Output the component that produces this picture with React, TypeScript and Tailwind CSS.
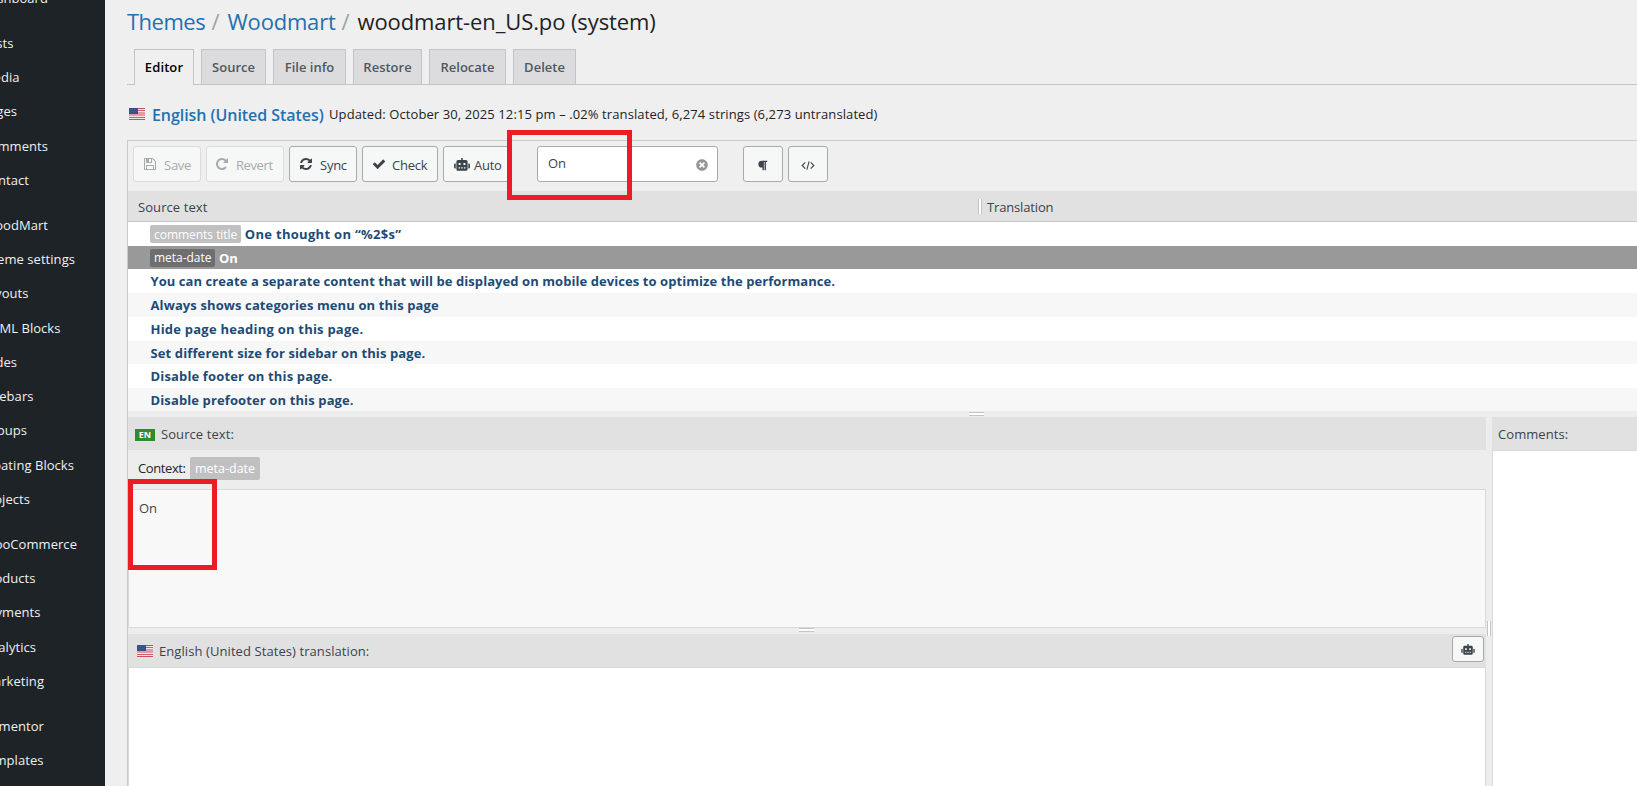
import { ReactNode } from "react";
import { FaParagraph, FaTimesCircle } from "react-icons/fa";

type MenuItem = { label: string; end: string; gap?: boolean };
type Row = { text: string; context?: string; height: string; bg: string; tracking: string; active?: boolean };

const MENU: MenuItem[] = [
  { label: "Dashboard", end: "w-[48px]" },
  { label: "Posts", end: "w-[13.5px]", gap: true },
  { label: "Media", end: "w-[19.5px]" },
  { label: "Pages", end: "w-[17px]" },
  { label: "Comments", end: "w-[48px]" },
  { label: "Contact", end: "w-[29px]" },
  { label: "WoodMart", end: "w-[48px]", gap: true },
  { label: "Theme settings", end: "w-[75px]" },
  { label: "Layouts", end: "w-[28.5px]" },
  { label: "HTML Blocks", end: "w-[60.5px]" },
  { label: "Slides", end: "w-[17px]" },
  { label: "Sidebars", end: "w-[33.5px]" },
  { label: "Popups", end: "w-[27px]" },
  { label: "Floating Blocks", end: "w-[74px]" },
  { label: "Projects", end: "w-[30px]" },
  { label: "WooCommerce", end: "w-[77px]", gap: true },
  { label: "Products", end: "w-[35.5px]" },
  { label: "Payments", end: "w-[40.5px]" },
  { label: "Analytics", end: "w-[36px]" },
  { label: "Marketing", end: "w-[44px]" },
  { label: "Elementor", end: "w-[44px]", gap: true },
  { label: "Templates", end: "w-[43.5px]" },
];

const TABS = [
  { label: "Source", width: "w-[65px]" },
  { label: "File info", width: "w-[73px]" },
  { label: "Restore", width: "w-[69px]" },
  { label: "Relocate", width: "w-[77px]" },
  { label: "Delete", width: "w-[63px]" },
];

const ROWS: Row[] = [
  { text: "One thought on “%2$s”", context: "comments title", height: "h-[24px]", bg: "bg-white", tracking: "tracking-[0.3px]" },
  { text: "On", context: "meta-date", height: "h-[23px]", bg: "bg-[#999999]", tracking: "tracking-[0.1px]", active: true },
  {
    text: "You can create a separate content that will be displayed on mobile devices to optimize the performance.",
    height: "h-[24px]",
    bg: "bg-white",
    tracking: "tracking-[0.07px]",
  },
  { text: "Always shows categories menu on this page", height: "h-[24px]", bg: "bg-[#f7f7f7]", tracking: "tracking-[0.11px]" },
  { text: "Hide page heading on this page.", height: "h-[24px]", bg: "bg-white", tracking: "tracking-[0.22px]" },
  { text: "Set different size for sidebar on this page.", height: "h-[23px]", bg: "bg-[#f7f7f7]", tracking: "tracking-[0.12px]" },
  { text: "Disable footer on this page.", height: "h-[24px]", bg: "bg-white", tracking: "tracking-[0.15px]" },
  { text: "Disable prefooter on this page.", height: "h-[23px]", bg: "bg-[#f7f7f7]", tracking: "tracking-[0.12px]" },
];

function SaveIcon() {
  return (
    <svg className="mb-px h-[14px] w-[12px]" viewBox="0 0 1536 1792" fill="currentColor">
      <path d="M384 1536h768v-384h-768v384zm896 0h128v-896q0-14-10-38.5t-20-34.5l-281-281q-10-10-34-20t-39-10v416q0 40-28 68t-68 28h-576q-40 0-68-28t-28-68v-416h-128v1280h128v-416q0-40 28-68t68-28h832q40 0 68 28t28 68v416zm-384-928v-320q0-13-9.5-22.5t-22.5-9.5h-192q-13 0-22.5 9.5t-9.5 22.5v320q0 13 9.5 22.5t22.5 9.5h192q13 0 22.5-9.5t9.5-22.5zm640 32v928q0 40-28 68t-68 28h-1344q-40 0-68-28t-28-68v-1344q0-40 28-68t68-28h928q40 0 88 20t76 48l280 280q28 28 48 76t20 88z" />
    </svg>
  );
}

function RevertIcon() {
  return (
    <svg className="h-[14px] w-[12px]" viewBox="0 0 1536 1792" fill="currentColor">
      <path d="M1536 256v448q0 26-19 45t-45 19h-448q-42 0-59-40-17-39 14-69l138-138q-148-137-349-137-104 0-198.5 40.5t-163.5 109.5-109.5 163.5-40.5 198.5 40.5 198.5 109.5 163.5 163.5 109.5 198.5 40.5q119 0 225-52t179-147q7-10 23-12 15 0 25 9l137 138q9 8 9.500 20.500t-7.500 22.500q-109 132-264 204.500t-327 72.500q-156 0-298-61t-245-164-164-245-61-298 61-298 164-245 245-164 298-61q147 0 284.500 55.500t244.500 156.500l130-129q29-31 70-14 39 17 39 59z" />
    </svg>
  );
}

function SyncIcon() {
  return (
    <svg className="h-[14px] w-[12px]" viewBox="0 0 1536 1792" fill="currentColor">
      <path d="M1511 1056q0 5-1 7-64 268-268 434.5t-478 166.5q-146 0-282.5-55t-243.5-157l-129 129q-19 19-45 19t-45-19-19-45v-448q0-26 19-45t45-19h448q26 0 45 19t19 45-19 45l-137 137q71 66 161 102t187 36q134 0 250-65t186-179q11-17 53-117 8-23 30-23h192q13 0 22.5 9.5t9.5 22.5zm25-800v448q0 26-19 45t-45 19h-448q-26 0-45-19t-19-45 19-45l138-138q-148-137-349-137-134 0-250 65t-186 179q-11 17-53 117-8 23-30 23h-199q-13 0-22.5-9.5t-9.5-22.5v-7q65-268 270-434.5t480-166.5q146 0 284 55.5t245 156.5l130-129q19-19 45-19t45 19 19 45z" />
    </svg>
  );
}

function CheckIcon() {
  return (
    <svg className="h-[14px] w-[14px]" viewBox="0 0 1792 1792" fill="currentColor">
      <path d="M1671 566q0 40-28 68l-724 724-136 136q-28 28-68 28t-68-28l-136-136-362-362q-28-28-28-68t28-68l136-136q28-28 68-28t68 28l294 295 656-657q28-28 68-28t68 28l136 136q28 28 28 68z" />
    </svg>
  );
}

function RobotIcon({ className }: { className: string }) {
  return (
    <svg className={className} viewBox="0 0 16 13" fill="currentColor">
      <path
        fillRule="evenodd"
        d="M7.2 0h1.6v2H12a1.6 1.6 0 0 1 1.6 1.6v7.6A1.6 1.6 0 0 1 12 12.8H4a1.6 1.6 0 0 1-1.6-1.6V3.6A1.6 1.6 0 0 1 4 2h3.2zM4.6 5v2h2V5zM9.4 5v2h2V5zM4.6 9.2v1.2h1.5V9.2zM7.25 9.2v1.2h1.5V9.2zM9.9 9.2v1.2h1.5V9.2z"
      />
      <path d="M1.7 5.5v5H1.2A1.2 1.2 0 0 1 0 9.3V6.7A1.2 1.2 0 0 1 1.2 5.5zM14.3 5.5v5h.5A1.2 1.2 0 0 0 16 9.3V6.7A1.2 1.2 0 0 0 14.8 5.5z" />
    </svg>
  );
}

function Flag() {
  return (
    <svg className="h-[12px] w-[16px] shrink-0" viewBox="0 0 16 12" shapeRendering="crispEdges">
      <rect width="16" height="12" fill="#e39aa5" />
      <path d="M0 0h16v1H0zM0 11h16v1H0z" fill="#c8505f" />
      <path d="M9 2h7v1H9zM0 9h16v1H0z" fill="#cf5f6e" />
      <path d="M9 1h7v1H9zM9 3h7v1H9zM0 8h16v1H0zM0 10h16v1H0z" fill="#f3e4e7" />
      <rect width="9" height="6" fill="#3a4f82" />
      <path d="M1 1h1v1H1zM3 1h1v1H3zM5 1h1v1H5zM7 1h1v1H7zM2 3h1v1H2zM4 3h1v1H4zM6 3h1v1H6z" fill="#4a5f90" />
    </svg>
  );
}

function ToolButton({ width, disabled, children }: { width: string; disabled?: boolean; children: ReactNode }) {
  return (
    <button
      type="button"
      className={`flex h-[36px] shrink-0 items-center rounded-[3px] border bg-[#f6f7f7] text-[13px] tracking-[-0.25px] ${width} ${
        disabled ? "border-[#dcdcde] text-[#a7aaad]" : "border-[#a7a9ab] text-[#3c434a]"
      }`}
    >
      {children}
    </button>
  );
}

function VGrip() {
  return <span className="block w-[4px] border-x border-[#c4c4c4] bg-white" />;
}

function HGrip() {
  return <span className="block h-[4px] w-[15px] border-y border-[#c4c4c4] bg-white" />;
}

export default function App() {
  return (
    <div className="relative flex h-[786px] w-[1637px] overflow-hidden bg-[#efefef] font-['Open_Sans',sans-serif] text-[13px] text-[#3c434a]">
      <aside className="w-[105px] shrink-0 overflow-hidden bg-[#1d2327]">
        <ul className="-mt-[18.6px] tracking-[0.05px] text-[#f0f0f1]">
          {MENU.map((item) => (
            <li
              key={item.label}
              className={`flex h-[34.25px] items-center justify-end whitespace-nowrap ${item.end} ${item.gap ? "mt-[10.8px]" : ""}`}
            >
              {item.label}
            </li>
          ))}
        </ul>
      </aside>

      <main className="flex min-w-0 flex-1 flex-col pl-[22px]">
        <h1 className="flex h-[43px] shrink-0 items-center whitespace-pre text-[22px] text-[#1d2327]">
          <a className="w-[84.5px] tracking-[-0.5px] text-[#2271b1]">Themes</a>
          <span className="w-[16px] text-[#a0a2a5]">/</span>
          <a className="w-[114px] tracking-[-0.2px] text-[#2271b1]">Woodmart</a>
          <span className="w-[16px] text-[#a0a2a5]">/</span>
          <span className="tracking-[-0.1px]">woodmart-en_US.po (system)</span>
        </h1>

        <nav className="mt-[6px] flex h-[36px] shrink-0 gap-[7px] border-b border-[#c3c4c7] pl-[7px] font-semibold text-[#50575e]">
          <a className="flex h-[36px] w-[60px] items-center justify-center border border-b-0 border-[#c3c4c7] bg-[#efefef] tracking-[0.1px] text-black">
            Editor
          </a>
          {TABS.map((tab) => (
            <a
              key={tab.label}
              className={`flex h-[35px] items-center justify-center border border-b-0 border-[#c3c4c7] bg-[#dcdcde] pt-px ${tab.width}`}
            >
              {tab.label}
            </a>
          ))}
        </nav>

        <div className="flex h-[55px] shrink-0 items-center whitespace-nowrap pl-[2px] pt-[3px]">
          <Flag />
          <a className="ml-[7px] mt-[2px] w-[177px] text-[16px] font-semibold tracking-[-0.06px] text-[#2271b1]">English (United States)</a>
          <span className="mt-[2px] tracking-[0.1px] text-[#1d2327]">
            Updated: October 30, 2025 12:15 pm – .02% translated, 6,274 strings (6,273 untranslated)
          </span>
        </div>

        <section className="flex flex-1 flex-col border-l border-t border-[#c9cacb]">
          <div className="flex h-[50px] shrink-0 gap-[5px] pl-[5px] pt-[5px]">
            <ToolButton width="w-[68px] pl-[10px] gap-[8px]" disabled>
              <SaveIcon />
              <span className="mt-[3px]">Save</span>
            </ToolButton>
            <ToolButton width="w-[78px] pl-[9px] gap-[8px]" disabled>
              <RevertIcon />
              <span className="mt-[3px] tracking-[-0.4px]">Revert</span>
            </ToolButton>
            <ToolButton width="w-[68px] pl-[10px] gap-[8px]">
              <SyncIcon />
              <span className="mt-[3px]">Sync</span>
            </ToolButton>
            <ToolButton width="w-[76px] pl-[9px] gap-[6px]">
              <CheckIcon />
              <span className="mt-[3px]">Check</span>
            </ToolButton>
            <ToolButton width="w-[67px] pl-[10px] gap-[4px]">
              <RobotIcon className="h-[13px] w-[16px]" />
              <span className="mt-[3px]">Auto</span>
            </ToolButton>
            <div className="ml-[22px] flex h-[36px] w-[181px] items-center justify-between rounded-[3px] border border-[#a7a9ab] bg-white pl-[10px] pr-[9px]">
              <span className="tracking-[-0.2px]">On</span>
              <FaTimesCircle className="mt-[2px] size-[12px] text-[#969696]" />
            </div>
            <div className="ml-[20px] flex gap-[5px]">
              <ToolButton width="w-[40px] justify-center pr-[2px]">
                <FaParagraph className="mt-[3px] size-[11px]" />
              </ToolButton>
              <ToolButton width="w-[40px] justify-center pr-[1px]">
                <svg className="mt-[2px] h-[9px] w-[14px]" viewBox="0 0 15 10" fill="none" stroke="currentColor" strokeWidth="1.2">
                  <path d="M4.5 1.5 1 5l3.5 3.5M10.5 1.5 14 5l-3.5 3.5M8.800 .3 6.200 9.700" />
                </svg>
              </ToolButton>
            </div>
          </div>

          <div className="flex h-[31px] shrink-0 items-center border-b border-[#c9cacb] bg-[#e1e1e1] pl-[10px]">
            <span className="mt-[3px] w-[840px] tracking-[0.08px]">Source text</span>
            <span className="flex h-[15px]">
              <VGrip />
            </span>
            <span className="ml-[5px] mt-[3px] tracking-[-0.15px]">Translation</span>
          </div>

          {ROWS.map((row) => (
            <div key={row.text} className={`flex shrink-0 items-center whitespace-nowrap pl-[22px] ${row.height} ${row.bg}`}>
              {row.context && (
                <span
                  className={`mr-[3.5px] flex h-[18px] items-center rounded-[2px] px-[4px] text-[12px] tracking-[-0.03px] text-white ${
                    row.active ? "bg-[#6e6e6e]" : "bg-[#c0c0c0] pt-px"
                  }`}
                >
                  {row.context}
                </span>
              )}
              <span
                className={`mt-[2px] font-bold ${row.tracking} ${row.context ? "" : "pl-[0.5px]"} ${row.active ? "text-white" : "text-[#1d4b76]"}`}
              >
                {row.text}
              </span>
            </div>
          ))}

          <div className="flex h-[6px] shrink-0 items-center bg-[#ededed] pl-[841px]">
            <HGrip />
          </div>

          <div className="flex min-h-0 flex-1 bg-[#ededed]">
            <div className="flex w-[1358px] shrink-0 flex-col">
              <div className="flex h-[33px] shrink-0 items-center bg-[#e1e1e1] pl-[7px]">
                <span className="mt-[3px] flex h-[12px] w-[20px] items-center justify-center bg-[#2e8b2e] text-[9px] font-bold text-white">EN</span>
                <span className="ml-[6px] mt-[2px] tracking-[0.08px]">Source text:</span>
              </div>
              <div className="flex h-[39px] shrink-0 items-center pb-[3px] pl-[10px]">
                <span className="mt-[2px] w-[52px] tracking-[-0.4px] text-[#1d2327]">Context:</span>
                <span className="flex h-[23px] items-center rounded-[2px] bg-[#c0c0c0] px-[5px] pt-[2px] text-[12.5px] font-medium text-white">
                  meta-date
                </span>
              </div>
              <div className="h-[139px] shrink-0 border border-[#d9d9d9] bg-[#f8f8f8] px-[10px] pt-[8px] leading-[21px]">On</div>
              <div className="flex h-[6px] shrink-0 items-start pl-[671px]">
                <HGrip />
              </div>
              <div className="flex h-[33px] shrink-0 items-center bg-[#e1e1e1] pl-[9px]">
                <Flag />
                <span className="ml-[6px] mt-[2px] tracking-[0.08px]">English (United States) translation:</span>
                <button
                  type="button"
                  className="mb-[3px] ml-auto mr-[2px] flex h-[26px] w-[32px] items-center justify-center rounded-[3px] border border-[#a7a9ab] bg-[#f6f7f7]"
                >
                  <RobotIcon className="mt-px h-[11px] w-[14px]" />
                </button>
              </div>
              <div className="flex-1 border border-b-0 border-[#d9d9d9] bg-white" />
            </div>

            <div className="flex w-[6px] shrink-0 pt-[204px]">
              <span className="flex h-[15px] pl-px">
                <VGrip />
              </span>
            </div>

            <div className="flex min-w-0 flex-1 flex-col">
              <div className="flex h-[33px] shrink-0 items-center bg-[#e1e1e1] pl-[6px]">
                <span className="mt-[2px] tracking-[0.06px]">Comments:</span>
              </div>
              <div className="flex-1 border-l border-t border-[#d9d9d9] bg-white" />
            </div>
          </div>
        </section>
      </main>

      {/* highlight boxes */}
      <div className="absolute left-[507px] top-[130px] h-[70px] w-[125px] border-[5px] border-[#ed1c24]" />
      <div className="absolute left-[128px] top-[479px] h-[91px] w-[89px] border-[5px] border-[#ed1c24]" />
    </div>
  );
}
